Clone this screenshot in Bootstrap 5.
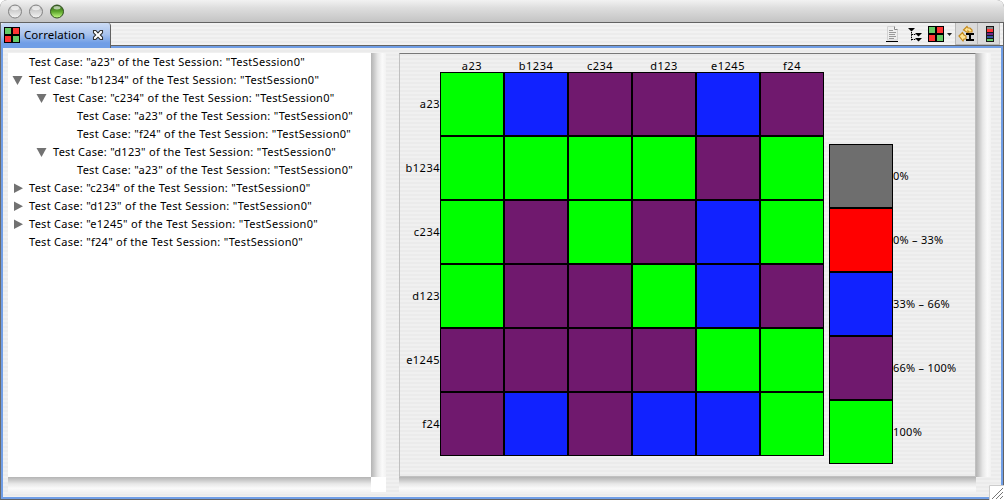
<!DOCTYPE html>
<html lang="en">
<head>
<meta charset="utf-8">
<title>Correlation</title>
<link href="https://cdn.jsdelivr.net/npm/bootstrap@5.3.0/dist/css/bootstrap.min.css" rel="stylesheet">
<style>
body{font-family:"Noto Sans","Open Sans",sans-serif;font-size:11px;line-height:18px;color:#000;background:#fff;overflow:hidden}
svg{display:block}
.window{width:1004px;height:500px;background:#626262;border-radius:7px 7px 0 0}
.titlebar{height:22px;padding-left:8px;gap:7px;background:linear-gradient(#f2f2f2,#dedede 35%,#c4c4c4);flex:none}
.viewframe{margin-top:1px;border-left:1px solid #6b6b6b;border-right:1px solid #626262;border-bottom:1px solid #626262;min-height:0}
.tabstrip{height:23px;background:repeating-linear-gradient(#f2f2f2 0 2px,#ececec 2px 4px);flex:none;border-bottom:1px solid #646464}
.viewtab{width:110px;height:25px;padding:0 6px 2px 3px;background:linear-gradient(#ccdcf5,#a8c2ec 45%,#709ee6 80%);border-right:1px solid #626262;border-radius:3px 3px 0 0;font-size:11.5px;position:relative}
.viewtab .title{margin-left:4px;letter-spacing:.06px}
.tool{height:22px}
.pressed{background:#dadada;border:1px solid #b7b7b7;border-top:0}
.viewbody{border:2px solid #709ee6;padding:5px 11px 5px 5px;background:repeating-linear-gradient(#f0f0f0 0 2px,#ebebeb 2px 4px);min-height:0}
.treepane{width:378px;display:grid;grid-template:424px 15px/363px 15px}
.tree{padding:0 0 0 5px;background:#fff}
.treerow{height:18px;white-space:nowrap;letter-spacing:.285px}
.twisty{width:16px;height:18px;flex:none}
.vtrack{background:linear-gradient(90deg,#b4b4b4,#c9c9c9 20%,#e7e7e7 45%,#fafafa 75%,#f2f2f2)}
.htrack{background:linear-gradient(#b4b4b4,#c9c9c9 20%,#e7e7e7 45%,#fafafa 75%,#f2f2f2)}
.canvaspane{margin-left:13px;display:grid;grid-template:424px 15px/577px 15px}
.chart{border:1px solid #c0c0c0;border-top-color:#787878;height:424px}
.matrix{display:grid;grid-template-columns:40px repeat(6,64px);grid-template-rows:18px repeat(6,64px)}
.collabel{text-align:center;line-height:18px;padding-top:3px;height:18px}
.rowlabel{text-align:right;line-height:64px;white-space:nowrap}
.collabel,.rowlabel{letter-spacing:.5px}
.cell{width:64px;height:64px;border:1px solid #000}
.g{background:#0f0}.b{background:#1122ff}.p{background:#70196e}.r{background:#f00}.n{background:#6e6e6e}
.legend{margin:90px 0 0 5px}
.legend .key{line-height:64px;white-space:nowrap;letter-spacing:.25px}
.grip{right:0;bottom:0;width:15px;height:15px}
</style>
</head>
<body>
<div class="window d-flex flex-column position-relative overflow-hidden">
  <div class="titlebar d-flex align-items-center">
    <svg width="14" height="15" viewBox="0 0 14 15"><use href="#lamp"/></svg>
    <svg width="14" height="15" viewBox="0 0 14 15"><use href="#lamp"/></svg>
    <svg width="14" height="15" viewBox="0 0 14 15"><circle cx="7" cy="7.500" r="6.500" fill="url(#green)" stroke="#2f4f1e"/><ellipse cx="7" cy="3.800" rx="3.500" ry="1.700" fill="#fff" opacity=".6"/></svg>
  </div>
  <div class="viewframe d-flex flex-column flex-grow-1">
    <div class="tabstrip d-flex justify-content-between">
      <div class="viewtab d-flex align-items-center">
        <svg width="16" height="16"><use href="#fourcell"/></svg>
        <span class="title">Correlation</span>
        <svg class="ms-auto" width="12" height="12" viewBox="0 0 12 12"><path d="M1.500 1.500h2.300L6 3.900l2.200-2.400h2.300v2.300L8.300 6l2.200 2.200v2.300H8.200L6 8.200 3.800 10.500H1.500V8.200L3.700 6 1.500 3.800Z" fill="#fff" stroke="#333" stroke-width="1.100"/></svg>
      </div>
      <div class="d-flex">
        <svg class="tool" width="20" height="22" viewBox="0 0 20 22"><path d="M4.500 3.500h7l3 3V17h-10Z" fill="#eee" stroke="#d2d2d2"/><path d="M11.500 3.500v3h3" fill="#fff" stroke="#888"/><path d="M6 7.500h4M6 9.500h7M6 11.500h6M6 13.500h7M6 15.500h5" stroke="#999"/><path d="M3 18.500h12" stroke="#000"/></svg>
        <svg class="tool" width="24" height="22" viewBox="0 0 24 22"><path d="M5 5h7L8.500 8.500ZM12 10h7l-3.500 3.500ZM12 15h7l-3.500 3.500Z"/><path d="M8.500 9v9M8.500 11.500h4M8.500 16.500h4" fill="none" stroke="#000" stroke-dasharray="1.500 .8"/></svg>
        <svg class="tool" width="28" height="22" viewBox="0 0 28 22"><g transform="translate(1 3)"><use href="#fourcell"/></g><path d="M20 10h5l-2.500 3Z" fill="#222"/></svg>
        <div class="tool pressed"><svg width="21" height="20" viewBox="0 0 21 20"><path d="M7.500 7 11 3.500l1 1.500h2l2 2v2h-3l-1-1v2ZM3 13 6.500 9.500 8 12l2 1v3H8l-1 2Z" fill="#ffe394" stroke="#c58a1c" stroke-width="1.200"/><path d="M10 10h8v2h-3v4h3v2h-8v-2h3v-4h-3Z"/></svg></div>
        <div class="tool pressed border-start-0" style="margin-right:3px"><svg width="21" height="20" viewBox="0 0 21 20"><path d="M8 3h8v16H8Z" fill="#181818"/><path d="M9 4h6v2H9Z" fill="#888"/><path d="M9 6h6v3H9Z" fill="#f33"/><path d="M9 10h6v2H9Z" fill="#70258a"/><path d="M9 13h6v2H9Z" fill="#3155a0"/><path d="M9 16h6v2H9Z" fill="#6c6"/></svg></div>
      </div>
    </div>
    <div class="viewbody d-flex flex-grow-1">
      <div class="treepane">
        <div class="tree" id="tree"></div>
        <div class="vtrack"></div>
        <div class="htrack"></div>
        <div class="bg-white"></div>
      </div>
      <div class="canvaspane">
        <div class="chart d-flex">
          <div class="matrix" id="matrix"></div>
          <div class="legend" id="legend"></div>
        </div>
        <div class="vtrack"></div>
        <div class="htrack"></div>
      </div>
    </div>
  </div>
  <svg class="grip position-absolute" viewBox="0 0 15 15"><path d="M0 0h15v15H0Z" fill="#fff"/><path d="M.5 15V.5H15" fill="none" stroke="#ccc"/><path d="M3 14 14 3M7 14l7-7M11 14l3-3" stroke="#777"/></svg>
</div>
<svg width="0" height="0" class="position-absolute">
  <defs>
    <linearGradient id="grey" x2="0" y2="1"><stop stop-color="#aaa"/><stop offset=".4" stop-color="#ccc"/><stop offset="1" stop-color="#f5f5f5"/></linearGradient>
    <linearGradient id="green" x2="0" y2="1"><stop stop-color="#2f5a18"/><stop offset=".5" stop-color="#5da62c"/><stop offset="1" stop-color="#c6ff86"/></linearGradient>
    <g id="lamp"><circle cx="7" cy="7.500" r="6.500" fill="url(#grey)" stroke="#818181"/><ellipse cx="7" cy="4" rx="4" ry="2.200" fill="#fff" opacity=".65"/></g>
    <g id="fourcell"><path d="M0 0h16v16H0Z"/><path d="M1 1h6v6H1ZM9 9h6v6H9Z" fill="#6c6"/><path d="M9 1h6v6H9ZM1 9h6v6H1Z" fill="#f33"/></g>
  </defs>
</svg>
<script>
const rows = [[0,'','a23'],[0,'open','b1234'],[1,'open','c234'],[2,'','a23'],[2,'','f24'],[1,'open','d123'],[2,'','a23'],[0,'shut','c234'],[0,'shut','d123'],[0,'shut','e1245'],[0,'','f24']];
const shapes = {open:'<path d="M-.5 5h10l-5 9Z" fill="#727272"/>', shut:'<path d="M1 4.500v9.500l9-4.750Z" fill="#727272"/>', '':''};
document.getElementById('tree').innerHTML = rows.map(([depth, state, name]) =>
  `<div class="treerow d-flex" style="padding-left:${depth * 24}px"><svg class="twisty overflow-visible" viewBox="0 0 16 18">${shapes[state]}</svg><span>Test Case: "${name}" of the Test Session: "TestSession0"</span></div>`).join('');
const names = ['a23','b1234','c234','d123','e1245','f24'];
const data = ['gbppbp','ggggpg','gpgpbg','gppgbp','ppppgg','pbpbbg'];
document.getElementById('matrix').innerHTML = '<div></div>' + names.map(n => `<div class="collabel">${n}</div>`).join('') +
  data.map((line, i) => `<div class="rowlabel">${names[i]}</div>` + [...line].map(c => `<div class="cell ${c}"></div>`).join('')).join('');
document.getElementById('legend').innerHTML = [['n','0%'],['r','0% – 33%'],['b','33% – 66%'],['p','66% – 100%'],['g','100%']]
  .map(([c, t]) => `<div class="d-flex"><div class="cell ${c}"></div><span class="key">${t}</span></div>`).join('');
</script>
<script src="https://cdn.jsdelivr.net/npm/bootstrap@5.3.0/dist/js/bootstrap.bundle.min.js"></script>
</body>
</html>
